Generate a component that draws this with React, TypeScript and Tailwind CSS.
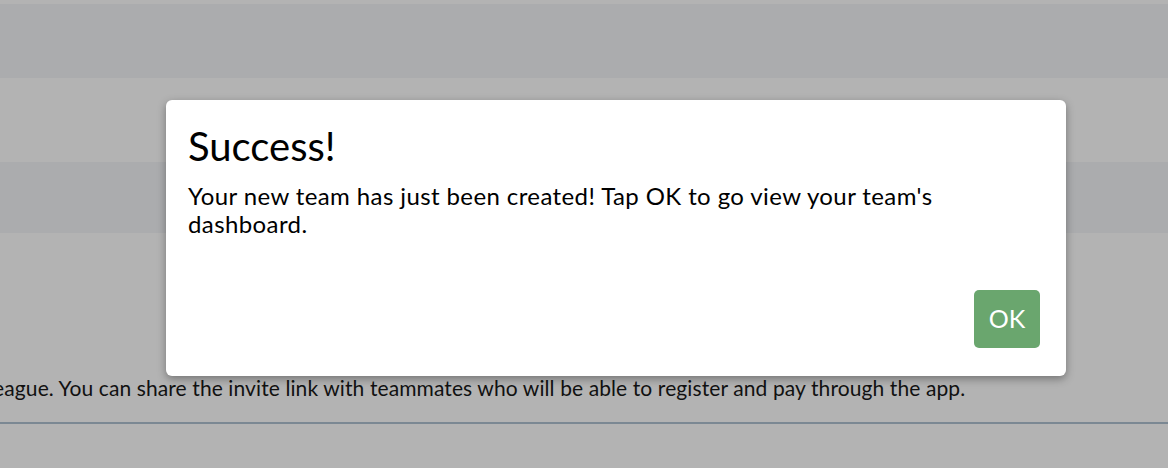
import React from "react";

export default function App() {
  return (
    <div
      className="relative w-[1168px] h-[468px] overflow-hidden bg-[#b3b3b3]"
      style={{ fontFamily: "Lato, 'Open Sans', sans-serif" }}
    >
      <div className="flex flex-col">
        <div className="h-[4px]" />
        <div className="h-[74px] bg-[#abacae]" />
        <div className="h-[84px]" />
        <div className="h-[71px] bg-[#abacae]" />
        <div className="h-[143px]" />
        <div className="-ml-[17px] whitespace-nowrap text-[21px] leading-[24px] tracking-[0.1px] text-[#111111]">
          League. You can share the invite link with teammates who will be able to register and pay through the app.
        </div>
        <div className="h-[22px]" />
        <div className="h-[2px] bg-[#7b8893]" />
      </div>

      <div className="absolute left-[166px] top-[100px] w-[900px] h-[276px] rounded-[6px] bg-white shadow-[0_3px_8px_rgba(0,0,0,0.35)] flex flex-col pl-[22px] pr-[26px] pt-[20px] pb-[28px]">
        <h2 className="text-[40px] leading-[52px] text-black">Success!</h2>
        <p className="mt-[10px] max-w-[790px] text-[24px] leading-[28px] tracking-[0.4px] text-black">
          Your new team has just been created! Tap OK to go view your team's dashboard.
        </p>
        <div className="mt-auto flex justify-end">
          <button className="w-[66px] h-[58px] rounded-[5px] bg-[#6aa66e] text-white text-[25px] flex items-center justify-center">
            OK
          </button>
        </div>
      </div>
    </div>
  );
}
